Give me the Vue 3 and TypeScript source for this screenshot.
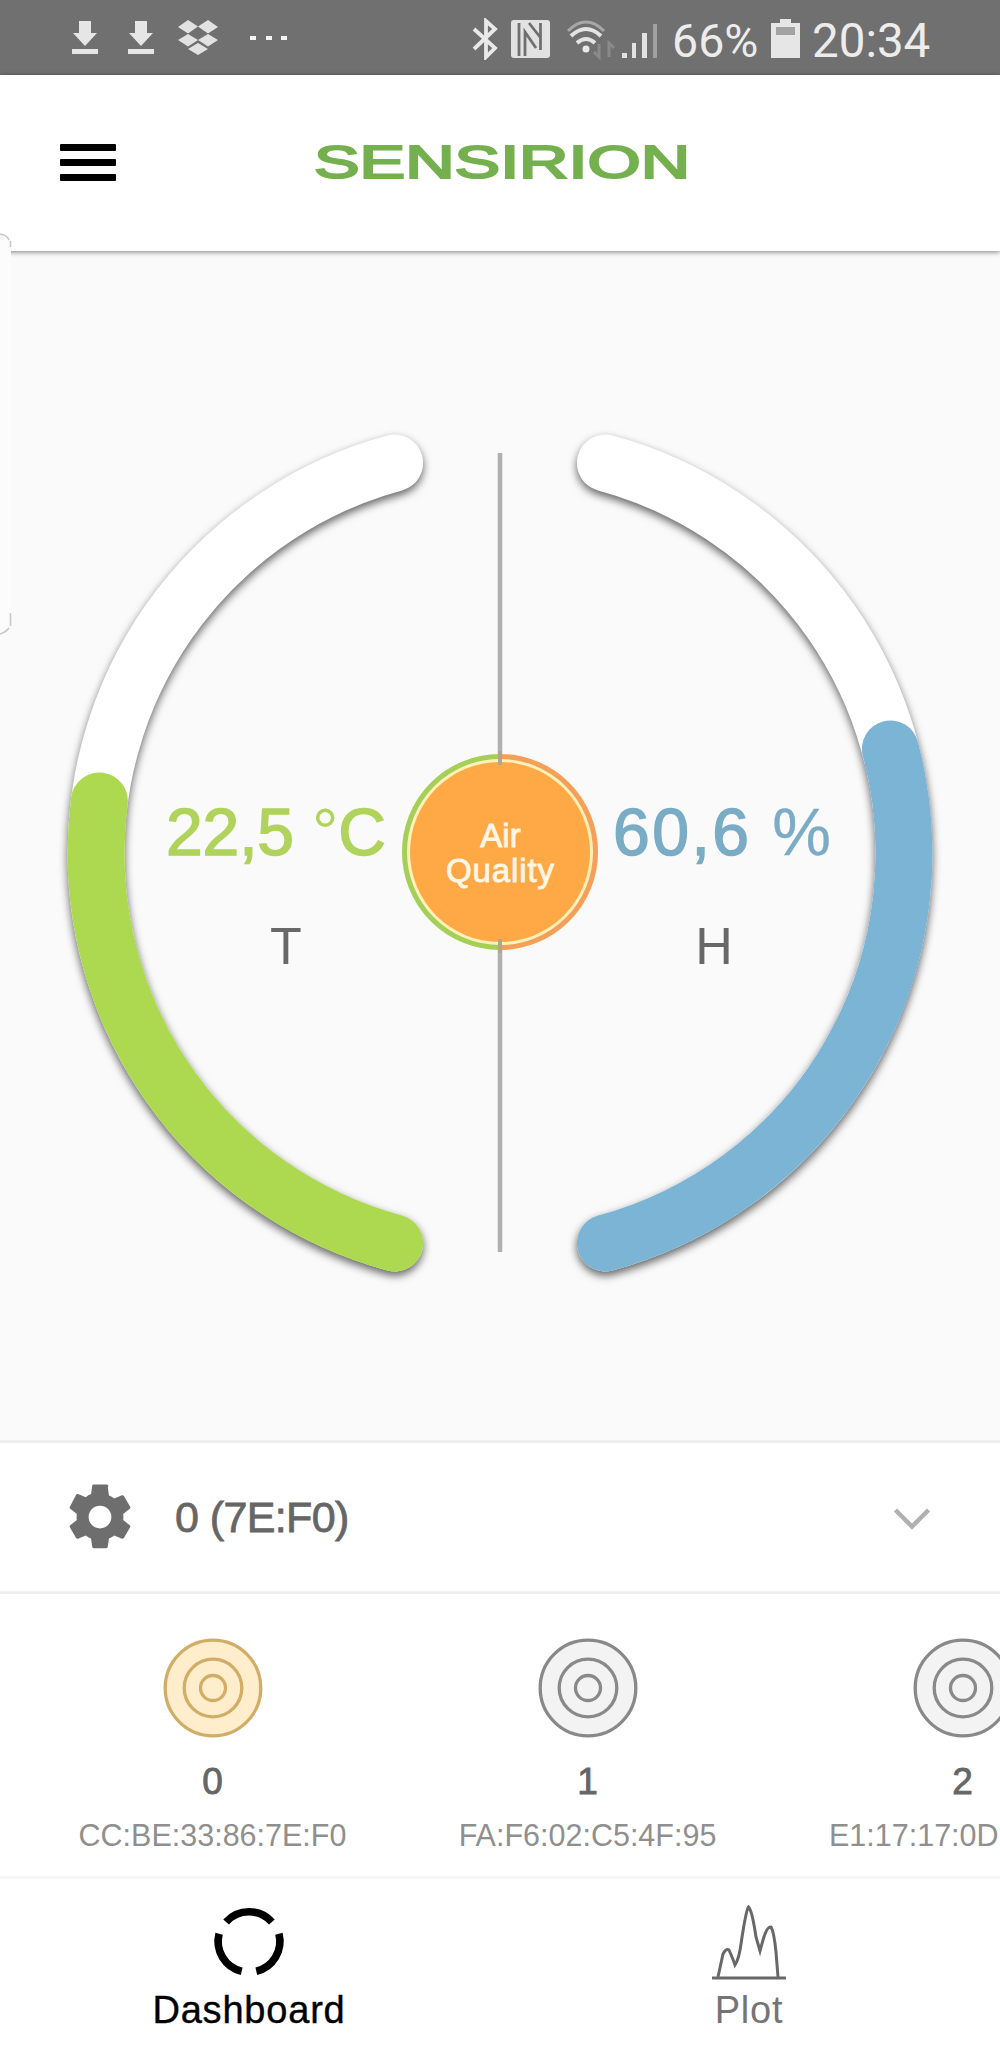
<script setup lang="ts">
interface Device {
  id: string
  mac: string
  active?: boolean
  clipped?: boolean
}

const devices: Device[] = [
  { id: '0', mac: 'CC:BE:33:86:7E:F0', active: true },
  { id: '1', mac: 'FA:F6:02:C5:4F:95' },
  { id: '2', mac: 'E1:17:17:0D', clipped: true },
]

const CX = 500
const CY = 602
const R = 404
const END = 390

// Point on the dial for a vertical offset from its centre; side is -1 (left) or 1 (right).
function at(dy: number, side: number): string {
  return `${(CX + side * Math.sqrt(R * R - dy * dy)).toFixed(1)} ${CY + dy}`
}

function arc(from: number, side: number): string {
  return `M${at(from, side)} A${R} ${R} 0 0 ${side === 1 ? 1 : 0} ${at(END, side)}`
}

const gauges = [
  { side: -1, start: -52, color: '#acd950' },
  { side: 1, start: -104, color: '#7cb4d5' },
]
</script>

<template>
  <div class="screen">
    <div class="status">
      <div class="group left">
        <svg v-for="n in 2" :key="n" class="dl" width="26" height="36" viewBox="0 0 26 36">
          <path d="M7 1h12v12h6L13 26 1 13h6zM0 29h26v5H0z" fill="#e6e6e6" />
        </svg>
        <svg class="dropbox" width="40" height="36" viewBox="0 0 40 36">
          <path d="M10 0l10 6.500-10 7L0 7zM30 0l10 7-10 6.500-10-7zM10 14l10 6-10 6.500L0 20zM30 14l10 6-10 6.500-10-6.500zM20 23l10 6-10 6-10-6z" fill="#e2e2e2" />
        </svg>
        <svg class="dots" width="38" height="6" viewBox="0 0 38 6">
          <path d="M0 1h6v4H0zM16 1h6v4h-6zM31 1h6v4h-6z" fill="#f4f4f4" />
        </svg>
      </div>
      <div class="group right">
        <svg class="bt" width="26" height="42" viewBox="0 0 26 42">
          <path d="M2 11l21 19-9 9V3l9 8L2 31" fill="none" stroke="#e9e9e9" stroke-width="3.800" />
        </svg>
        <svg class="nfc" width="39" height="39" viewBox="0 0 39 39">
          <rect width="39" height="38" rx="3" fill="#e2e2e2" />
          <path d="M8 3v33M14 36V12L25 28M18 3L29 17M29.500 3V30" fill="none" stroke="#707070" stroke-width="2.800" />
        </svg>
        <svg class="wifi" width="48" height="40" viewBox="0 0 48 40">
          <path d="M1 11Q19-7 37 11" fill="none" stroke="#a8a8a8" stroke-width="3" />
          <path d="M4 16Q19 2 34 16M10 23Q19 15 28 23" fill="none" stroke="#e4e4e4" stroke-width="4" />
          <circle cx="19" cy="29" r="3.500" fill="#e9e9e9" />
          <path d="M32 24v13l-5-5M42 37V23l5 5" fill="none" stroke="#8a8a8a" stroke-width="3" />
        </svg>
        <svg class="signal" width="38" height="40" viewBox="0 0 38 40">
          <path d="M1 33h5v5H1zM11 23h4v15h-4zM21 13h5v25h-5z" fill="#e2e2e2" />
          <path d="M32 4h4v34h-4z" fill="#a0a0a0" />
        </svg>
        <span class="percent">66%</span>
        <svg class="battery" width="29" height="40" viewBox="0 0 29 40">
          <path d="M9 0h11v4h9v35H0V4h9z" fill="#e6e6e6" />
          <path d="M5 8h19v8H5z" fill="#a3a3a3" />
        </svg>
        <span class="clock">20:34</span>
      </div>
    </div>

    <header class="header">
      <div class="burger"><i /><i /><i /></div>
      <svg class="logo" width="384" height="56" viewBox="-6 -6 384 56">
        <text x="-1" y="38" textLength="376" lengthAdjust="spacingAndGlyphs">SENSIRION</text>
      </svg>
    </header>
    <svg class="edge" width="16" height="408" viewBox="0 0 16 408">
      <path d="M-4 3H0Q11 5 11 17V388Q11 400 0 404H-4z" fill="#fcfcfc" />
      <path d="M0 4Q7 5 9 10M10.500 11v6M10.500 383v13M9 398Q6 402 0 404" fill="none" stroke="#c8c8c8" stroke-width="1.600" />
    </svg>

    <main class="dial">
      <svg width="1000" height="1189" viewBox="0 0 1000 1189">
        <path d="M500 202V1001" stroke="#b0b0b0" stroke-width="4.500" />
        <g v-for="g in gauges" :key="g.side" class="ring">
          <path :d="arc(-END, g.side)" stroke="#fff" />
          <path :d="arc(g.start, g.side)" :stroke="g.color" />
        </g>
        <circle cx="500" cy="601" r="98" fill="#fff0b8" />
        <path d="M500 505.500A95.500 95.500 0 0 0 500 696.500" fill="none" stroke="#a4cf58" stroke-width="5" />
        <path d="M500 505.500A95.500 95.500 0 0 1 500 696.500" fill="none" stroke="#f4a05a" stroke-width="5" />
        <circle cx="500" cy="601" r="90" fill="#ffa846" />
        <path d="M500 500v14M500 688v14" stroke="#b4a58a" stroke-width="4" />
        <g class="center">
          <text x="500.500" y="596">Air</text>
          <text x="500" y="631" textLength="108">Quality</text>
        </g>
        <text class="value" x="166" y="604" textLength="220" fill="#b0d35c" stroke="#b0d35c">22,5 <tspan stroke-width="0">°</tspan>C</text>
        <text class="value" x="613" y="604" textLength="218" fill="#7aacc5" stroke="#7aacc5">60,6 <tspan stroke-width="0.300">%</tspan></text>
        <text class="unit" x="286" y="713">T</text>
        <text class="unit" x="714" y="713">H</text>
      </svg>
    </main>

    <section class="selected">
      <svg class="gear" width="78" height="78" viewBox="0 0 24 24">
        <path d="M19.140 12.940c.040-.300.060-.610.060-.940s-.020-.640-.070-.940l2.030-1.580a.49.49 0 0 0 .120-.610l-1.920-3.320a.488.488 0 0 0-.590-.220l-2.390.960c-.500-.380-1.030-.700-1.620-.940l-.360-2.540A.484.484 0 0 0 13.920 2h-3.840c-.240 0-.430.170-.470.410l-.360 2.540c-.590.240-1.130.570-1.620.940l-2.390-.960a.48.48 0 0 0-.590.220L2.740 8.870c-.120.210-.080.470.120.610l2.030 1.580c-.050.300-.090.630-.090.940s.020.640.070.940l-2.030 1.580a.49.49 0 0 0-.120.610l1.920 3.320c.120.220.370.290.590.220l2.390-.960c.500.380 1.030.700 1.620.940l.360 2.540c.050.240.240.410.480.410h3.840c.240 0 .440-.170.470-.410l.360-2.540c.590-.240 1.130-.560 1.620-.940l2.390.960c.220.080.470 0 .590-.220l1.920-3.320a.48.48 0 0 0-.120-.610zM12 15.500a3.500 3.500 0 1 1 0-7 3.500 3.500 0 0 1 0 7z" fill="#6e6e6e" />
      </svg>
      <span class="name">0 (7E:F0)</span>
      <svg class="chevron" width="38" height="24" viewBox="0 0 38 24">
        <path d="M2.500 3L19 19.500 35.500 3" fill="none" stroke="#b0b0b0" stroke-width="4.500" />
      </svg>
    </section>

    <section class="devices">
      <div v-for="d in devices" :key="d.id" class="device" :class="{ active: d.active }">
        <svg width="100" height="100" viewBox="0 0 100 100">
          <circle cx="50" cy="50" r="47.800" />
          <circle cx="50" cy="50" r="28.800" />
          <circle cx="50" cy="50" r="12.500" />
        </svg>
        <b>{{ d.id }}</b>
        <span class="mac" :class="{ clipped: d.clipped }">{{ d.mac }}</span>
      </div>
    </section>

    <nav class="tabs">
      <div class="tab current">
        <svg width="76" height="76" viewBox="-39 -39 78 78">
          <g fill="none" stroke="#000" stroke-width="7.800">
            <path d="M-23.500-20.500A31.500 31.500 0 0 1 23.500-20.500" />
            <path d="M-30.700-8.500A31.500 31.500 0 0 0-7.500 30" />
            <path d="M30.700-8.500A31.500 31.500 0 0 1 7.500 30" />
          </g>
        </svg>
        <span>Dashboard</span>
      </div>
      <div class="tab">
        <svg width="76" height="76" viewBox="0 0 76 76">
          <g fill="none" stroke="#686868" stroke-width="3">
            <path d="M7 73L12 50Q15 44 18 46Q22 55 24 61Q28 55 30 40Q35 6 37.500 3Q41 6 45 33L49 47L52 36Q56 22 60 23Q63 28 65 48L67 73" />
            <path d="M1 74h74" />
          </g>
        </svg>
        <span>Plot</span>
      </div>
    </nav>
  </div>
</template>

<style>
body {
  margin: 0;
}
</style>

<style scoped>
.screen {
  position: relative;
  width: 1000px;
  height: 2054px;
  overflow: hidden;
  display: flex;
  flex-direction: column;
  background: #fafafa;
  font-family: "Liberation Sans", Arial, sans-serif;
}
svg {
  display: block;
  flex: none;
}
.status {
  height: 75px;
  flex: none;
  background: #707070;
  display: flex;
  justify-content: space-between;
  font-family: Roboto, sans-serif;
  color: #ececec;
}
.group {
  display: flex;
  align-items: flex-start;
}
.left {
  padding-left: 72px;
}
.dl {
  margin: 20px 30px 0 0;
}
.dropbox {
  margin: 20px 32px 0 -6px;
}
.dots {
  margin-top: 35px;
}
.right {
  padding-right: 68px;
}
.bt {
  margin: 18px 13px 0 0;
}
.nfc {
  margin: 20px 17px 0 0;
}
.wifi {
  margin: 20px 6px 0 0;
}
.signal {
  margin: 20px 0 0;
}
.percent {
  width: 87px;
  margin: 14px 0 0 13px;
  font-size: 46.500px;
  line-height: 54px;
}
.battery {
  margin: 19px 12px 0 12px;
}
.clock {
  width: 120px;
  margin-top: 14px;
  font-size: 47.500px;
  line-height: 54px;
}
.header {
  position: relative;
  height: 176px;
  flex: none;
  display: flex;
  align-items: flex-start;
  background: #fff;
  box-shadow: 0 1px 5px rgba(0, 0, 0, 0.5);
}
.burger {
  width: 56px;
  margin: 69px 193px 0 60px;
  display: flex;
  flex-direction: column;
  gap: 8.500px;
}
.burger i {
  height: 6.500px;
  border-radius: 1px;
  background: #000;
}
.logo {
  margin-top: 59px;
}
.logo text {
  font-size: 46px;
  fill: #74b04e;
  stroke: #74b04e;
  stroke-width: 2.100px;
}
.edge {
  position: absolute;
  left: 0;
  top: 230px;
}
.dial {
  height: 1189px;
  flex: none;
}
.ring {
  fill: none;
  stroke-width: 57px;
  stroke-linecap: round;
  filter: drop-shadow(0 4px 4px rgba(0, 0, 0, 0.6));
}
.center {
  font-size: 33px;
  text-anchor: middle;
  fill: #fff6e4;
  stroke: #fff6e4;
  stroke-width: 0.900px;
}
.value {
  font-size: 66px;
  stroke-width: 1.500px;
}
.unit {
  font-size: 52px;
  text-anchor: middle;
  fill: #686868;
}
.selected {
  height: 148px;
  flex: none;
  display: flex;
  align-items: center;
  background: #fff;
  border-top: 3px solid #eee;
  border-bottom: 3px solid #f0f0f0;
}
.gear {
  margin: 0 36px 0 61px;
}
.name {
  font-size: 43px;
  letter-spacing: -0.600px;
  color: #666;
  -webkit-text-stroke: 0.800px #666;
}
.chevron {
  margin: 4px 69px 0 auto;
}
.devices {
  height: 282px;
  flex: none;
  display: flex;
  padding-left: 25px;
  background: #fff;
  border-bottom: 3px solid #f7f7f7;
}
.device {
  width: 375px;
  flex: none;
  display: flex;
  flex-direction: column;
  align-items: center;
  padding-top: 44px;
  box-sizing: border-box;
}
.device circle {
  fill: #f3f3f3;
  stroke: #898989;
  stroke-width: 3.300px;
}
.device.active circle {
  fill: #ffedcc;
  stroke: #d2ad67;
}
.device b {
  margin-top: 23px;
  font-size: 37px;
  line-height: 42px;
  font-weight: 400;
  color: #666;
  -webkit-text-stroke: 0.900px #666;
}
.mac {
  margin-top: 15px;
  font-size: 30.500px;
  line-height: 34px;
  color: #8f8f8f;
}
.mac.clipped {
  width: 267px;
}
.tabs {
  flex: 1;
  display: flex;
  background: #fff;
}
.tab {
  width: 500px;
  display: flex;
  flex-direction: column;
  align-items: center;
  padding-top: 25px;
  font-size: 38px;
  letter-spacing: 0.800px;
  color: #757575;
}
.tab svg {
  margin-left: -3px;
}
.tab span {
  margin: 8px 0 0 -2px;
  line-height: 44px;
}
.current {
  color: #000;
  -webkit-text-stroke: 0.400px #000;
}
</style>
